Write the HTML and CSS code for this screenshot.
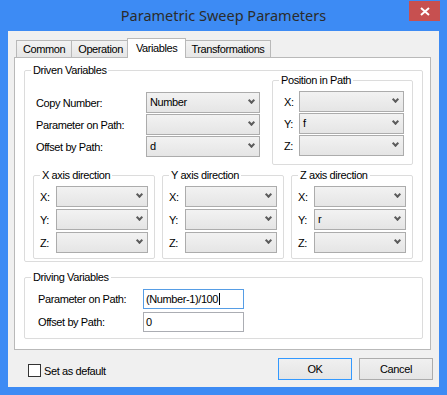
FILE: index.html
```html
<!DOCTYPE html>
<html lang="en">
<head>
<title>Parametric Sweep Parameters</title>
<link rel="stylesheet" href="styles.css">
</head>
<body>
<div class="window">
    <div class="titlebar">
        <span class="title">Parametric Sweep Parameters</span>
        <button class="close" type="button">
            <svg width="10" height="9" viewBox="0 0 10 9"><path d="M1 1 L9 8 M9 1 L1 8" stroke="#fff" stroke-width="2" fill="none"/></svg>
        </button>
    </div>
    <div class="client">
        <div class="tabs">
            <div class="tab">Common</div>
            <div class="tab">Operation</div>
            <div class="tab active">Variables</div>
            <div class="tab">Transformations</div>
        </div>
        <div class="panel">
            <fieldset class="group driven">
                <legend>Driven Variables</legend>
                <div class="driven-top">
                    <div class="form-rows">
                        <div class="row"><label>Copy Number:</label><div class="combo">Number</div></div>
                        <div class="row"><label>Parameter on Path:</label><div class="combo"></div></div>
                        <div class="row"><label>Offset by Path:</label><div class="combo">d</div></div>
                    </div>
                    <fieldset class="group position">
                        <legend>Position in Path</legend>
                        <div class="row"><label>X:</label><div class="combo"></div></div>
                        <div class="row"><label>Y:</label><div class="combo">f</div></div>
                        <div class="row"><label>Z:</label><div class="combo"></div></div>
                    </fieldset>
                </div>
                <div class="axes">
                    <fieldset class="group axis">
                        <legend>X axis direction</legend>
                        <div class="row"><label>X:</label><div class="combo"></div></div>
                        <div class="row"><label>Y:</label><div class="combo"></div></div>
                        <div class="row"><label>Z:</label><div class="combo"></div></div>
                    </fieldset>
                    <fieldset class="group axis">
                        <legend>Y axis direction</legend>
                        <div class="row"><label>X:</label><div class="combo"></div></div>
                        <div class="row"><label>Y:</label><div class="combo"></div></div>
                        <div class="row"><label>Z:</label><div class="combo"></div></div>
                    </fieldset>
                    <fieldset class="group axis">
                        <legend>Z axis direction</legend>
                        <div class="row"><label>X:</label><div class="combo"></div></div>
                        <div class="row"><label>Y:</label><div class="combo">r</div></div>
                        <div class="row"><label>Z:</label><div class="combo"></div></div>
                    </fieldset>
                </div>
            </fieldset>
            <fieldset class="group driving">
                <legend>Driving Variables</legend>
                <div class="row"><label>Parameter on Path:</label><div class="textbox focused"><span class="caret">(Number-1)/100</span></div></div>
                <div class="row"><label>Offset by Path:</label><div class="textbox">0</div></div>
            </fieldset>
        </div>
        <div class="footer">
            <label class="check"><span class="box"></span>Set as default</label>
            <div class="buttons">
                <button class="btn default" type="button">OK</button>
                <button class="btn" type="button">Cancel</button>
            </div>
        </div>
    </div>
</div>
</body>
</html>
```

FILE: styles.css
```css
body {
    margin: 0;
    font-family: "Liberation Sans", Arial, sans-serif;
    font-size: 11px;
    letter-spacing: -0.4px;
    color: #000;
}

.window {
    width: 447px;
    height: 395px;
    background-color: #3d8bf4; /* window frame blue */
    display: flex;
    flex-direction: column;
}

.titlebar {
    height: 31px;
    position: relative;
    display: flex;
    justify-content: center;
    align-items: center;
}

.title {
    font-family: "Noto Sans", sans-serif;
    font-size: 14.5px;
    letter-spacing: 0;
    color: #2b2b2b;
    margin-top: -1px;
}

.close {
    position: absolute;
    top: 1px;
    right: 7px;
    width: 31px;
    height: 20px;
    border: none;
    padding: 0;
    background-color: #c75050;
    display: flex;
    justify-content: center;
    align-items: center;
}

.client {
    flex: 1;
    margin: 0 8px 8px 8px;
    background-color: #f0f0f0;
    padding: 7px 6px 0 6px;
}

/* tab strip */
.tabs {
    height: 19px;
    display: flex;
    align-items: flex-end;
    padding-left: 2px;
}

.tab {
    height: 17px;
    line-height: 17px;
    padding: 0 6px;
    border: 1px solid #b9b9b9;
    border-bottom: none;
    background: linear-gradient(#f2f2f2, #e6e6e6);
    box-sizing: border-box;
    margin-right: -1px;
}

.tab.active {
    height: 20px;
    line-height: 18px;
    margin: 0 -2px -1px -2px;
    padding: 0 8px;
    background: #fff;
    position: relative;
    z-index: 1;
}

.panel {
    height: 293px;
    box-sizing: border-box;
    margin-right: 2px;
    background-color: #fff;
    border: 1px solid #b9b9b9;
    padding: 6px 7px 0 9px;
}

/* group boxes - legend sits 6px in from the box edge */
.group {
    margin: 0;
    border: 1px solid #dcdcdc;
    border-radius: 2px;
    min-width: 0;
}

.group legend {
    padding: 0 2px;
    line-height: 12px;
}

.row {
    display: flex;
    align-items: center;
}

.row label {
    flex: none;
}

.combo {
    height: 21px;
    line-height: 19px;
    box-sizing: border-box;
    border: 1px solid #acacac;
    background: linear-gradient(#f2f2f2, #e5e5e5);
    padding-left: 3px;
    position: relative;
}

.combo::after {
    content: "";
    position: absolute;
    right: 5px;
    top: 5px;
    width: 3px;
    height: 3px;
    border-right: 2px solid #5c5c5c;
    border-bottom: 2px solid #5c5c5c;
    transform: rotate(45deg);
}

.driven {
    padding: 0 9px 2px 8px;
}

.driven > legend {
    margin-left: -2px;
}

.driven-top {
    display: flex;
    justify-content: space-between;
    margin-top: -2px;
}

.form-rows {
    margin-top: 18px;
    padding-left: 3px;
}

.form-rows .row {
    margin-bottom: 1px;
}

.form-rows label {
    width: 110px;
}

.form-rows .combo {
    width: 114px;
}

.position {
    width: 141px;
    box-sizing: border-box;
    padding: 5px 8px 7px 11px;
}

.position > legend {
    margin-left: -5px;
}

.position .row {
    margin-bottom: 1px;
}

.position label {
    width: 15px;
}

.position .combo,
.axis .combo {
    flex: 1;
}

.axes {
    display: grid;
    grid-template-columns: repeat(3, 1fr);
    gap: 7px;
    margin-top: 4px;
}

.axis {
    padding: 5px 6px 5px 6px;
}

.axis .row + .row {
    margin-top: 2px;
}

.axis label {
    width: 16px;
}

.driving {
    margin-top: 9px;
    padding: 6px 0 6px 13px;
}

.driving > legend {
    margin-left: -7px;
}

.driving label {
    width: 105px;
}

.driving .row + .row {
    margin-top: 3px;
}

.textbox {
    width: 101px;
    height: 20px;
    line-height: 18px;
    box-sizing: border-box;
    border: 1px solid #abadb3;
    background: #fff;
    padding-left: 2px;
}

.textbox.focused {
    border-color: #569de5;
}

.caret {
    border-right: 1px solid #000;
    padding-right: 1px;
}

/* bottom row */
.footer {
    display: flex;
    justify-content: space-between;
    align-items: center;
    padding: 8px 0 7px 0;
}

.check {
    display: flex;
    align-items: center;
    margin-left: 14px;
    margin-top: 3px;
}

.check .box {
    width: 13px;
    height: 13px;
    box-sizing: border-box;
    border: 1px solid #333;
    background: #fff;
    margin-right: 3px;
}

.buttons {
    display: flex;
    gap: 7px;
}

.btn {
    width: 74px;
    height: 22px;
    border: 1px solid #acacac;
    background: linear-gradient(#f0f0f0, #e5e5e5);
    font-family: "Liberation Sans", Arial, sans-serif;
    font-size: 11px;
    letter-spacing: -0.4px;
    padding: 0;
    color: #000;
}

.btn.default {
    border-color: #3399ff;
}
```
